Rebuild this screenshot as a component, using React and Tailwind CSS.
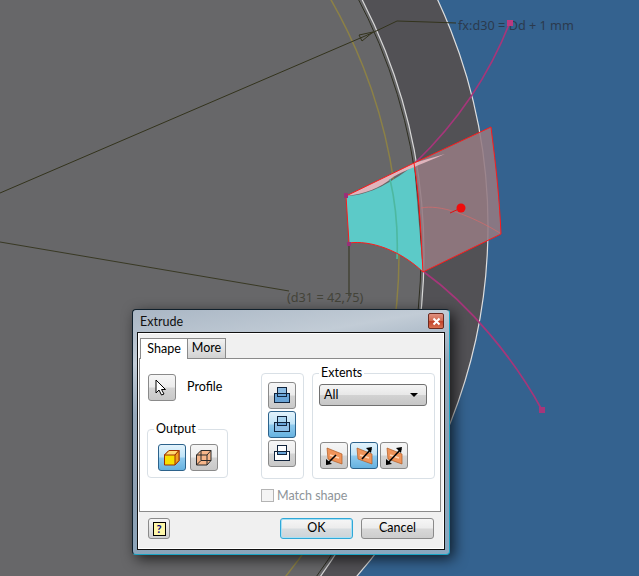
import React from 'react';

const FONT = 'font-["Lato",sans-serif]';
const BTN = 'flex w-[28px] h-[27px] items-center justify-center rounded-[3px] border border-[#8a8a8a] bg-[linear-gradient(#f6f6f6_0%,#ececec_48%,#d4d4d4_52%,#c8c8c8_100%)]';
const BTN_ON = 'flex w-[28px] h-[27px] items-center justify-center rounded-[3px] border border-[#2c628b] bg-[linear-gradient(#e3f3fc_0%,#bfe3f7_48%,#8fcaee_52%,#66b2e0_100%)]';
const PUSH = 'flex h-[21px] w-[73px] items-center justify-center rounded-[3px] text-[12.5px] text-black';

// cad viewport behind the dialog
const Viewport = () => (
  <svg className="absolute inset-0" width="639" height="576" viewBox="0 0 639 576">
    <rect width="639" height="576" fill="#34628f" />
    <circle cx="-45" cy="226" r="533" fill="#525155" stroke="#dedede" strokeWidth="1.2" />
    <circle cx="-129" cy="254" r="553" fill="#676769" stroke="#d8d8d8" strokeWidth="1.2" />
    <circle cx="-129" cy="254" r="550" fill="none" stroke="#2f2f22" strokeWidth="1" />
    <circle cx="-113" cy="255" r="512" fill="none" stroke="#8c8146" strokeWidth="1.5" />

    <polyline points="0,193 372,33 397,21 428,22 456,23" fill="none" stroke="#33331c" strokeWidth="1" />
    <polygon points="359,35 373,32 362,41" fill="none" stroke="#33331c" strokeWidth="1" />
    <polyline points="0,242 289,291" fill="none" stroke="#33331c" strokeWidth="0.9" />
    <polyline points="349,245 349,296" fill="none" stroke="#33331c" strokeWidth="1" />
    <text x="287" y="302" fontFamily="Noto Sans, sans-serif" fontSize="12.7" fill="#44443a">(d31 = 42,75)</text>
    <text x="458" y="30" fontFamily="Noto Sans, sans-serif" fontSize="12.7" fill="#2b3a4e">fx:d30 = Dd + 1 mm</text>

    <path d="M510 22 C496 58 470 110 415 163" fill="none" stroke="#a6367a" strokeWidth="1.7" />
    <rect x="507" y="20" width="6" height="6" fill="#b83a80" />
    <path d="M424 272 C470 305 515 360 542 410" fill="none" stroke="#a6367a" strokeWidth="1.7" />
    <rect x="539" y="407" width="6" height="6" fill="#a6367a" />

    {/* translucent face */}
    <path d="M414 163 L491 127 C495 160 499 190 501 234 L423 272 C421 240 420 200 414 163 Z" fill="#947a82" fillOpacity="0.88" />
    <path d="M346 196 C370 196 395 180 414 165 L423 272 C400 250 370 240 349 243 Z" fill="#5ccac8" />
    <path d="M346 196 L414 163 L445 154 C420 165 400 172 392 178 C380 188 365 194 346 196 Z" fill="#e0b4bc" />
    <path d="M390 179 C396 205 398 235 397 259" fill="none" stroke="#4db8a0" strokeWidth="1.6" />
    <path d="M346 196 L414 163 L491 127 C495 160 499 190 501 234 L423 272 C400 250 370 240 349 243 Z M414 163 C420 200 421 240 423 272" fill="none" stroke="#ff1a1a" strokeWidth="1" />
    <path d="M421 208 C440 204 470 215 500 233" fill="none" stroke="#d86a6a" strokeWidth="0.7" />
    <path d="M450 213 L461 208" fill="none" stroke="#e01010" strokeWidth="1" />
    <circle cx="461" cy="208" r="4.5" fill="#f00c0c" />
    <rect x="344" y="193" width="4" height="5" fill="#9a2f78" />
    <rect x="347" y="242" width="4" height="4" fill="#9a2f78" />
  </svg>
);

const PointerIcon = () => (
  <svg width="16" height="18" viewBox="0 0 16 18">
    <path d="M2 1 L2 14 L5 11 L7.5 16 L10 15 L7.5 10.5 L11.5 10.5 Z" fill="#fff" stroke="#000" strokeWidth="1" />
  </svg>
);

const DirIcon = ({ top, bottom, band }) => (
  <svg width="18" height="18" viewBox="0 0 18 18">
    <rect x="4.5" y="0.5" width="9" height="9" fill={top} stroke="#10233c" />
    <rect x="1.5" y="6.5" width="15" height="9" fill={bottom} stroke="#10233c" />
    <rect x="4.5" y="6.5" width="9" height="3" fill={band} stroke="#10233c" />
  </svg>
);

const SolidCube = () => (
  <svg width="18" height="18" viewBox="0 0 18 18">
    <path d="M1.5 6 L6 1.5 L16 1.5 L16 11.5 L12 16 L1.5 16 Z" fill="#f7e000" stroke="#a03000" />
    <path d="M1.5 6 L6 1.5 L16 1.5 L12 6 Z" fill="#ffd870" stroke="#a03000" />
    <path d="M12 6 L16 1.5 L16 11.5 L12 16 Z" fill="#f0a020" stroke="#a03000" />
  </svg>
);

const SurfaceCube = () => (
  <svg width="18" height="18" viewBox="0 0 18 18">
    <path d="M1.5 6 L6 1.5 L16 1.5 L16 11.5 L12 16 L1.5 16 Z" fill="#f6b68a" stroke="#2a2a2a" />
    <path d="M1.5 6 L12 6 L12 16 M12 6 L16 1.5 M6 1.5 L6 11.5 L1.5 16 M6 11.5 L16 11.5" fill="none" stroke="#2a2a2a" />
  </svg>
);

// wedge + arrow, which end has a head depends on the button
const ExtentIcon = ({ line, headUp, headDown }) => (
  <svg width="20" height="20" viewBox="0 0 20 20">
    <path d="M3 2 L18 8 L18 18 L4 13 Z" fill="#f0945a" stroke="#b05a20" strokeWidth="0.7" />
    <path d="M6 9 L15 12" stroke="#ffd8b8" strokeWidth="1.5" fill="none" />
    <path d={line} stroke="#000" strokeWidth="1.6" fill="none" />
    {headUp && <path d="M12 2 L18 1 L17 7 Z" fill="#000" />}
    {headDown && <path d="M2 13 L2 19 L8 18 Z" fill="#000" />}
  </svg>
);

const GroupBox = ({ label, className, children }) => (
  <div className={`relative rounded-[4px] border border-[#d9e0e6] ${className}`}>
    {label && <span className="absolute left-[6px] top-[-9px] bg-white px-[2px] text-[12.5px] leading-[15px] text-black">{label}</span>}
    {children}
  </div>
);

const Dialog = () => (
  <div className={`absolute left-[132px] top-[309px] flex h-[246px] w-[318px] flex-col rounded-[4px] border border-[#10202c] border-r-[#18a4c4] border-b-[#18a4c4] bg-[linear-gradient(170deg,#a9b6c4_0%,#c2ccd6_18%,#96a8ba_35%,#8ea0b2_60%,#8aa8c0_100%)] px-[4px] pb-[4px] shadow-[4px_4px_14px_rgba(0,0,0,0.7)] ${FONT}`}>
    <div className="flex h-[22px] shrink-0 items-center justify-between pr-[1px]">
      <span className="pl-[3px] pt-[2px] text-[12.5px] text-[#101010]">Extrude</span>
      <div className="flex h-[16px] w-[16px] items-center justify-center rounded-[2px] border border-[#6b2a20] bg-[linear-gradient(#e09080_0%,#d06a50_48%,#c04028_52%,#d87050_100%)]">
        <svg width="9" height="9" viewBox="0 0 9 9">
          <path d="M1.5 1.5 L7.5 7.5 M7.5 1.5 L1.5 7.5" stroke="#fff" strokeWidth="2" />
        </svg>
      </div>
    </div>
    <div className="flex flex-1 flex-col border border-[#101010]">
      <div className="flex flex-1 flex-col border border-white bg-[#f0f0f0] pt-[3px]">
        <div className="flex h-[21px] items-end pl-[1px]">
          <div className="z-10 mb-[-1px] flex h-[21px] w-[48px] items-center justify-center border border-b-0 border-[#8a8a8a] bg-white text-[12.5px] text-black">Shape</div>
          <div className="flex h-[20px] w-[38px] items-center justify-center border border-b-0 border-l-0 border-[#8a8a8a] bg-[linear-gradient(#f2f2f2,#d2d2d2)] text-[12.5px] text-black">More</div>
        </div>
        <div className="flex h-[154px] w-[302px] flex-col border border-[#8a8a8a] bg-white pl-[7px] pt-[14px]">
          <div className="flex gap-[33px]">
            <div className="flex w-[81px] flex-col">
              <div className="mt-[1px] flex items-center gap-[11px] pl-[1px]">
                <div className={BTN}><PointerIcon /></div>
                <span className="text-[12.5px] text-black">Profile</span>
              </div>
              <GroupBox label="Output" className="mt-[28px] flex h-[49px] gap-[4px] pl-[10px] pt-[14px]">
                <div className={BTN_ON}><SolidCube /></div>
                <div className={BTN}><SurfaceCube /></div>
              </GroupBox>
            </div>
            <div className="flex gap-[8px]">
              <GroupBox className="flex h-[106px] w-[43px] flex-col gap-[2px] pl-[6px] pt-[8px]">
                <div className={BTN}><DirIcon top="#8cbce4" bottom="#6aa5d8" band="#6aa5d8" /></div>
                <div className={BTN_ON}><DirIcon top="#a8d4f0" bottom="#8fc0e8" band="#6aa5d8" /></div>
                <div className={BTN}><DirIcon top="#ffffff" bottom="#ffffff" band="#6aa5d8" /></div>
              </GroupBox>
              <GroupBox label="Extents" className="flex h-[106px] w-[123px] flex-col pl-[6px] pt-[10px]">
                <div className="flex h-[22px] w-[108px] items-center justify-between rounded-[3px] border border-[#707070] bg-[linear-gradient(#f4f4f4_0%,#e8e8e8_48%,#d2d2d2_52%,#c6c6c6_100%)] pl-[4px] pr-[8px] text-[12.5px] text-black">
                  All
                  <span className="h-0 w-0 border-x-[4px] border-t-[4px] border-x-transparent border-t-black" />
                </div>
                <div className="mt-[36px] flex gap-[2px] pl-[1px]">
                  <div className={BTN}><ExtentIcon line="M3 18 L12 9" headDown /></div>
                  <div className={BTN_ON}><ExtentIcon line="M8 13 L17 3" headUp /></div>
                  <div className={BTN}><ExtentIcon line="M3 18 L17 3" headUp headDown /></div>
                </div>
              </GroupBox>
            </div>
          </div>
          <div className="ml-[114px] mt-[9px] flex items-center gap-[3px]">
            <span className="h-[13px] w-[13px] border border-[#b4b4b4] bg-[#f4f4f4]" />
            <span className="text-[12.5px] leading-[15px] text-[#8e9499]">Match shape</span>
          </div>
        </div>
        <div className="flex flex-1 items-center justify-between pb-[3px] pl-[9px] pr-[9px]">
          <div className="flex h-[21px] w-[22px] items-center justify-center rounded-[3px] border border-[#8a8a8a] bg-[linear-gradient(#f6f6f6,#d0d0d0)]">
            <span className="flex h-[14px] w-[13px] items-center justify-center border border-black bg-[#fff7a8] text-[11px] font-bold leading-none text-[#000080]">?</span>
          </div>
          <div className="flex gap-[8px]">
            <div className={`${PUSH} border border-[#2fa8d8] bg-[linear-gradient(#f6f6f6_0%,#ececec_48%,#d8dde0_52%,#cdd3d8_100%)] shadow-[inset_0_0_0_1px_#a8e0f4]`}>OK</div>
            <div className={`${PUSH} border border-[#8a8a8a] bg-[linear-gradient(#f6f6f6_0%,#ececec_48%,#d8d8d8_52%,#cdcdcd_100%)]`}>Cancel</div>
          </div>
        </div>
      </div>
    </div>
  </div>
);

export default function App() {
  return (
    <div className="relative h-[576px] w-[639px] overflow-hidden">
      <Viewport />
      <Dialog />
    </div>
  );
}
